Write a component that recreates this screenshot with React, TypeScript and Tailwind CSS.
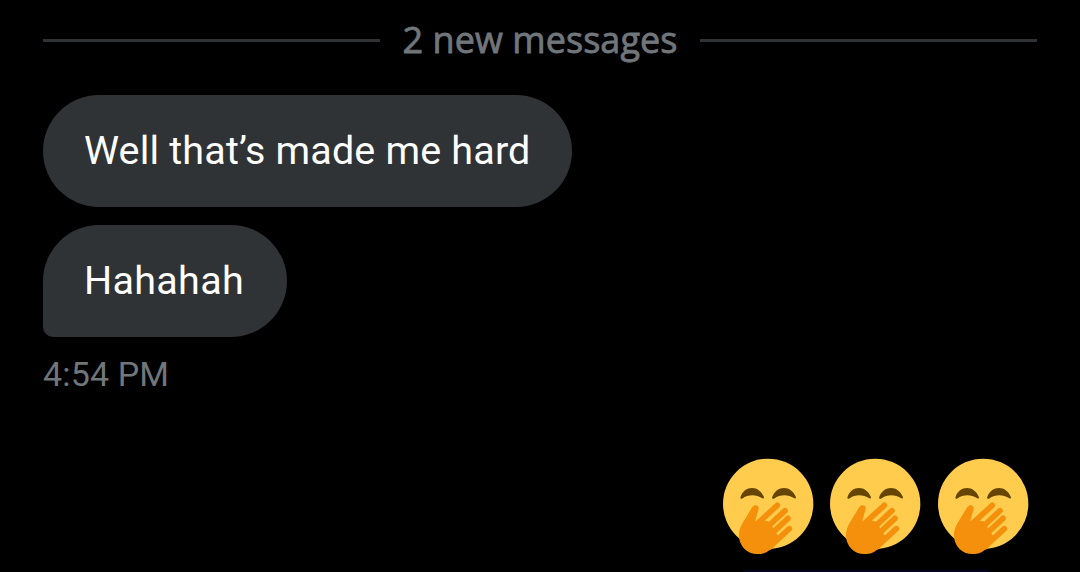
import React from "react";

interface BubbleProps {
    Text: string,
    Last?: boolean,
}

export function Divider({ Label }: { Label: string }) {
    return (
        <div className="flex items-center h-14 gap-5">
            <div className="flex-1 h-[3px] bg-[#2f3336]"></div>
            <span className="w-[280px] text-center whitespace-nowrap text-[36px] leading-[56px] font-medium tracking-[0.05px] text-[#71767b] font-['Open_Sans','Noto_Sans',sans-serif] [-webkit-text-stroke:0.8px_#71767b]">{Label}</span>
            <div className="flex-1 h-[3px] bg-[#2f3336]"></div>
        </div>
    );
}

export function Bubble(props: BubbleProps) {
    const { Text, Last } = props;
    return (
        <div className={`h-28 px-[41px] flex items-center whitespace-nowrap rounded-[56px] bg-[#2f3336] text-white text-[39.5px] leading-[56px] ${Last ? "w-[244px] rounded-bl-[10px] tracking-[0.3px]" : "w-[529px] tracking-[0.17px]"}`}>
            {Text}
        </div>
    );
}

export function GiggleEmoji() {
    return (
        <svg className="w-[92px] h-24" viewBox="21 24 276 288" fill="none" role="img" aria-label="Face with hand over mouth">
            <circle cx="159.5" cy="161.5" r="135.5" fill="#ffcc4d" />
            <path d="M76 143C82 123 96 114 111 114S140 124 147 142Q147 147 142 145C122 133 101 133 81 146Q76 147 76 143Z" fill="#664500" />
            <path d="M171 143C178 123 192 114 207 114S236 124 243 142Q243 147 238 145C218 133 197 133 177 146Q171 147 171 143Z" fill="#664500" />
            <path d="M112 171C119 161 133 166 131 177L121 212Q125 215 132 209L160 214L177 238L184 250L196 267L172 293C157 308 145 312 127 312C96 312 72 287 72 257C72 239 77 229 85 215Z" fill="#f4900c" />
            <g stroke="#f4900c" strokeWidth="17" strokeLinecap="round">
                <path d="M187 166L130 218" />
                <path d="M210 182L145 243" />
                <path d="M219 205L155 265" />
                <path d="M223 236L164 291" />
            </g>
        </svg>
    );
}

export default function App() {
    return (
        <div className="w-[1080px] h-[572px] overflow-hidden bg-black pl-[43px] pr-[43px] pt-3 flex flex-col font-['Roboto','Noto_Sans',sans-serif]">
            <Divider Label="2 new messages" />
            <div className="flex flex-col items-start gap-[18px] mt-[27px]">
                <Bubble Text="Well that’s made me hard" />
                <Bubble Text="Hahahah" Last />
            </div>
            <div className="h-12 mt-[13px] text-[34px] leading-[48px] text-[#71767b] tracking-[0.15px]">4:54 PM</div>
            <div className="flex justify-end gap-[15px] mt-[60px] pr-2">
                <GiggleEmoji />
                <GiggleEmoji />
                <div className="pl-px">
                    <GiggleEmoji />
                </div>
            </div>
            {/* top edge of the next bubble */}
            <div className="w-[246px] h-0.5 mt-4 mr-12 self-end shrink-0 bg-[#03031c]"></div>
        </div>
    );
}
